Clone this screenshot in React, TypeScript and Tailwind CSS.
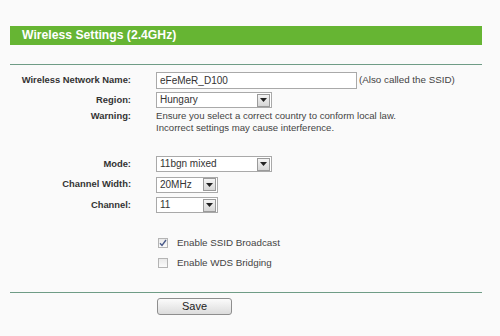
import React from 'react';

const Arrow = () => (
  <div className="w-[13px] h-[13px] mr-[1px] border border-[#9a9a9a] bg-gradient-to-b from-[#f4f4f4] to-[#d6d6d6] flex items-center justify-center">
    <svg width="7" height="4" viewBox="0 0 7 4">
      <path d="M0 0h7L3.5 4z" fill="#222" />
    </svg>
  </div>
);

const Select = ({ value, width }: { value: string; width: string }) => (
  <div className={`${width} h-[16px] border border-[#a9a9a9] bg-white flex items-center justify-between`}>
    <span className="pl-[3px] text-[10px] text-[#333] leading-none">{value}</span>
    <Arrow />
  </div>
);

const Row = ({ label, children, className = '' }: { label: string; children: React.ReactNode; className?: string }) => (
  <div className={`flex items-center ${className}`}>
    <div className="w-[131px] text-right text-[9.4px] font-bold text-[#333] shrink-0">{label}</div>
    <div className="pl-[25px] flex items-center">{children}</div>
  </div>
);

const Check = ({ checked, label }: { checked: boolean; label: string }) => (
  <div className="flex items-center h-[20px] pl-[158px]">
    <div className="w-[10px] h-[10px] border border-[#b4b4b4] bg-gradient-to-b from-[#e9e9e9] to-[#fbfbfb] flex items-center justify-center">
      {checked && (
        <svg width="8" height="8" viewBox="0 0 8 8">
          <path d="M1 4.2l2 2.3L7 1" stroke="#4a5a8a" strokeWidth="1.4" fill="none" />
        </svg>
      )}
    </div>
    <span className="ml-[9px] text-[9.8px] leading-none text-[#444]">{label}</span>
  </div>
);

export default function App() {
  return (
    <div className="w-[500px] h-[336px] bg-[#fafafa] font-['Liberation_Sans',Arial,sans-serif] overflow-hidden">
      <div className="pt-[26px] px-[10px] w-[492px]">
        <div className="h-[19px] bg-[#66b533] pl-[12px] text-[12.2px] leading-[19px] font-bold text-white">
          Wireless Settings (2.4GHz)
        </div>
        <div className="mt-[19px] h-px bg-[#6f9c86]" />
      </div>

      <div className="pt-[5px] text-[#333]">
        <Row label="Wireless Network Name:" className="h-[20px]">
          <div className="w-[201px] h-[17px] border border-[#a9a9a9] bg-white flex items-center pl-[3px] text-[10px] text-[#333]">
            eFeMeR_D100
          </div>
          <span className="ml-[2px] text-[9.8px] text-[#444]">(Also called the SSID)</span>
        </Row>
        <Row label="Region:" className="h-[20px]">
          <Select value="Hungary" width="w-[116px]" />
        </Row>
        <div className="flex items-start">
          <div className="w-[131px] text-right text-[9.4px] font-bold text-[#333] shrink-0 leading-[12px]">Warning:</div>
          <div className="pl-[25px] text-[9.6px] text-[#444] leading-[12px]">
            Ensure you select a correct country to conform local law.
            <br />
            Incorrect settings may cause interference.
          </div>
        </div>

        <Row label="Mode:" className="h-[20px] mt-[20px]">
          <Select value="11bgn mixed" width="w-[116px]" />
        </Row>
        <Row label="Channel Width:" className="h-[21px]">
          <Select value="20MHz" width="w-[62px]" />
        </Row>
        <Row label="Channel:" className="h-[20px]">
          <Select value="11" width="w-[62px]" />
        </Row>

        <div className="mt-[18px]">
          <Check checked label="Enable SSID Broadcast" />
          <Check checked={false} label="Enable WDS Bridging" />
        </div>
      </div>

      <div className="px-[10px] w-[492px] mt-[19px]">
        <div className="h-px bg-[#6f9c86]" />
      </div>
      <div className="pl-[157px] pt-[5px] flex">
        <button className="w-[75px] h-[17px] rounded-[3px] border border-[#8e8e8e] bg-gradient-to-b from-[#fbfbfb] to-[#dcdcdc] text-[11px] leading-none text-[#222]">
          Save
        </button>
      </div>
    </div>
  );
}
